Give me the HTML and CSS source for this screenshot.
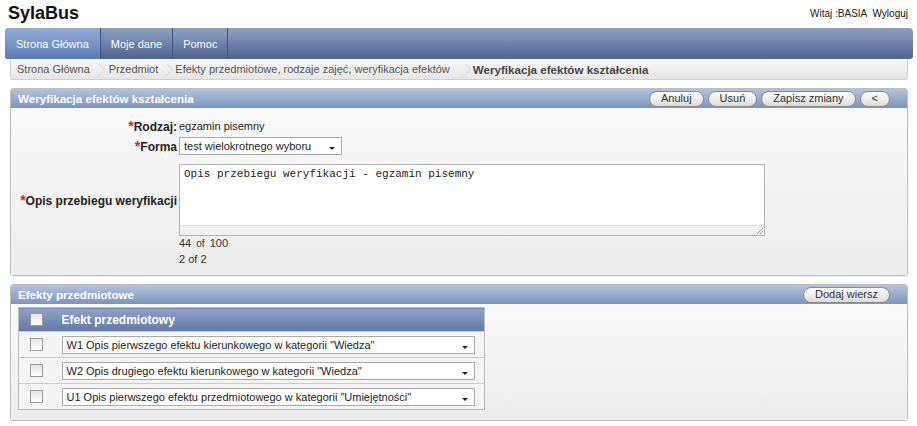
FILE: index.html
```html
<!DOCTYPE html>
<html lang="pl">
<head>
    <meta charset="UTF-8">
    <title>SylaBus</title>
    <link rel="stylesheet" href="styles.css">
</head>
<body>
    <div class="top">
        <div class="logo">SylaBus</div>
        <div class="user">Witaj :BASIA <a href="#">Wyloguj</a></div>
    </div>

    <ul class="nav">
        <li class="active">Strona Główna</li>
        <li>Moje dane</li>
        <li>Pomoc</li>
    </ul>

    <div class="crumbs">
        <span>Strona Główna</span>
        <span>Przedmiot</span>
        <span>Efekty przedmiotowe, rodzaje zajęć, weryfikacja efektów</span>
        <span class="current">Weryfikacja efektów kształcenia</span>
    </div>

    <div class="panel">
        <div class="panel-head">
            <span>Weryfikacja efektów kształcenia</span>
            <div class="buttons">
                <button>Anuluj</button>
                <button>Usuń</button>
                <button>Zapisz zmiany</button>
                <button>&lt;</button>
            </div>
        </div>
        <div class="panel-body form">
            <label class="lbl row-kind"><i>*</i>Rodzaj:</label>
            <div class="val row-kind">egzamin pisemny</div>

            <label class="lbl row-form"><i>*</i>Forma</label>
            <div class="val row-form">
                <div class="select small">test wielokrotnego wyboru</div>
            </div>

            <label class="lbl row-desc"><i>*</i>Opis przebiegu weryfikacji</label>
            <div class="val row-desc">
                <div class="textarea">
                    <div class="text">Opis przebiegu weryfikacji - egzamin pisemny</div>
                    <div class="grip">
                        <svg width="8" height="8" viewBox="0 0 8 8">
                            <path d="M7 1 L1 7 M7 4 L4 7" stroke="#999" stroke-width="1"/>
                        </svg>
                    </div>
                </div>
            </div>

            <div></div>
            <div class="val counter">44 <small>of</small> 100</div>

            <div></div>
            <div class="val counter pages">2 of 2</div>
        </div>
    </div>

    <div class="panel">
        <div class="panel-head">
            <span>Efekty przedmiotowe</span>
            <div class="buttons">
                <button>Dodaj wiersz</button>
            </div>
        </div>
        <div class="panel-body">
            <table class="grid">
                <tr>
                    <th class="chk"><span class="box"></span></th>
                    <th>Efekt przedmiotowy</th>
                </tr>
                <tr>
                    <td class="chk"><span class="box"></span></td>
                    <td><div class="select">W1 Opis pierwszego efektu kierunkowego w kategorii "Wiedza"</div></td>
                </tr>
                <tr>
                    <td class="chk"><span class="box"></span></td>
                    <td><div class="select">W2 Opis drugiego efektu kierunkowego w kategorii "Wiedza"</div></td>
                </tr>
                <tr>
                    <td class="chk"><span class="box"></span></td>
                    <td><div class="select">U1 Opis pierwszego efektu przedmiotowego w kategorii "Umiejętności"</div></td>
                </tr>
            </table>
        </div>
    </div>
</body>
</html>
```

FILE: styles.css
```css
body {
    margin: 0;
    font-family: 'Liberation Sans', Arial, sans-serif;
    font-size: 11px;
    color: #222;
    background-color: #ffffff;
}
.top {
    display: flex;
    justify-content: space-between;
    align-items: flex-end;
    height: 28px;
    padding: 0 9px 0 8px;
    box-sizing: border-box;
}
.logo {
    font-size: 18px;
    font-weight: bold;
    color: #111;
    line-height: 22px;
    padding-bottom: 4px;
}
.user {
    font-size: 10px;
    padding-bottom: 9px;
}
.user a {
    color: #111;
    text-decoration: none;
    margin-left: 3px;
}
.nav {
    display: flex;
    list-style: none;
    margin: 0 4px 0 5px;
    padding: 0;
    height: 31px;
    border-radius: 4px 4px 3px 3px;
    background: linear-gradient(#8ea0c1, #4f6490);
    overflow: hidden;
}
.nav li {
    color: #fff;
    padding: 0 10px;
    line-height: 32px;
    border-right: 1px solid #42557c;
}
.nav li.active {
    padding: 0 11px;
    background: linear-gradient(#93acd6, #5a7cb5);
}
.crumbs {
    display: flex;
    align-items: center;
    margin: 0 9px 0 10px;
    height: 20px;
    border: 1px solid #cfcfcf;
    border-top: none;
    border-radius: 0 0 3px 3px;
    background: linear-gradient(#f7f7f7, #e6e6e6);
    color: #555;
    padding-left: 6px;
}
.crumbs span {
    padding-right: 7px;
}
.crumbs span + span {
    padding-left: 12px;
    position: relative;
}
.crumbs span + span::before {
    content: '';
    position: absolute;
    left: -4px;
    top: 2px;
    width: 10px;
    height: 10px;
    border-top: 1px solid #d6d6d6;
    border-right: 1px solid #d6d6d6;
    transform: rotate(45deg) scale(0.75, 1);
}
.crumbs span:nth-child(3) {
    padding-left: 10px;
    padding-right: 13px;
}
.crumbs .current {
    font-weight: bold;
    font-size: 11.6px;
    color: #444;
    padding-left: 10px;
}
.panel {
    margin: 8px 9px 0 10px;
    border: 1px solid #bdbdbd;
    border-radius: 3px;
    box-shadow: 0 1px 1px rgba(0, 0, 0, 0.08);
}
.panel-head {
    display: flex;
    justify-content: space-between;
    align-items: center;
    height: 19px;
    padding: 0 17px 0 7px;
    background: linear-gradient(#b3c3dd, #7d95bd);
    color: #fff;
    font-weight: bold;
    font-size: 11.6px;
    border-radius: 2px 2px 0 0;
}
.buttons {
    display: flex;
    gap: 4px;
}
button {
    font-family: 'Liberation Sans', Arial, sans-serif;
    font-size: 11px;
    color: #333;
    height: 16px;
    padding: 0 11px;
    border: 1px solid #8a8a8a;
    border-radius: 8px;
    background: linear-gradient(#ffffff, #dcdcdc);
    line-height: 13px;
}
.panel-body {
    background: linear-gradient(#f9f9f9, #ececec);
    padding: 3px 7px 10px;
}
.form {
    display: grid;
    grid-template-columns: 166px 1fr;
    column-gap: 2px;
    padding: 9px 0 9px;
}
.lbl {
    font-weight: bold;
    font-size: 12px;
    text-align: right;
    align-self: center;
    color: #222;
}
.lbl i {
    color: #d22;
    font-style: normal;
    font-size: 14px;
}
.val {
    align-self: center;
}
.row-kind {
    height: 18px;
    line-height: 18px;
}
.row-form {
    margin-top: 2px;
}
.row-desc {
    margin-top: 9px;
}
.select {
    position: relative;
    height: 18px;
    line-height: 17px;
    border: 1px solid #aaa;
    background-color: #fff;
    padding: 0 20px 0 4px;
    white-space: nowrap;
    box-sizing: border-box;
}
.select::after {
    content: '';
    position: absolute;
    right: 6px;
    top: 9px;
    border-left: 3px solid transparent;
    border-right: 3px solid transparent;
    border-top: 3px solid #222;
}
.select.small {
    width: 163px;
}
.textarea {
    width: 586px;
    height: 72px;
    box-sizing: border-box;
    border: 1px solid #b4b4b4;
    background-color: #fff;
    display: flex;
    flex-direction: column;
}
.textarea .text {
    flex: 1;
    font-family: 'Liberation Mono', 'Courier New', monospace;
    font-size: 11px;
    padding: 3px 4px;
}
.textarea .grip {
    height: 9px;
    border-top: 1px solid #dcdcdc;
    background-color: #f0f0f0;
    display: flex;
    justify-content: flex-end;
    align-items: flex-end;
}
.textarea .grip svg {
    display: block;
}
.counter {
    color: #333;
    height: 14px;
    line-height: 14px;
}
.counter small {
    font-size: 10px;
    margin: 0 2px;
}
.pages {
    margin-top: 2px;
}
.grid {
    border-collapse: collapse;
    width: 467px;
    border: 1px solid #bcbcbc;
    background-color: #f4f4f4;
}
.grid th {
    height: 23px;
    background: linear-gradient(#8ea2c6, #6179a6);
    color: #fff;
    text-align: left;
    font-weight: bold;
    font-size: 12px;
    padding: 0;
}
.grid td {
    height: 25px;
    border-top: 1px solid #cbcbcb;
    padding: 0 9px 0 0;
}
.grid .chk {
    width: 43px;
    padding: 0 0 0 11px;
    box-sizing: border-box;
}
.box {
    display: block;
    width: 11px;
    height: 11px;
    border: 1px solid #999;
    background: linear-gradient(#e4e4e4, #ffffff);
}
```
